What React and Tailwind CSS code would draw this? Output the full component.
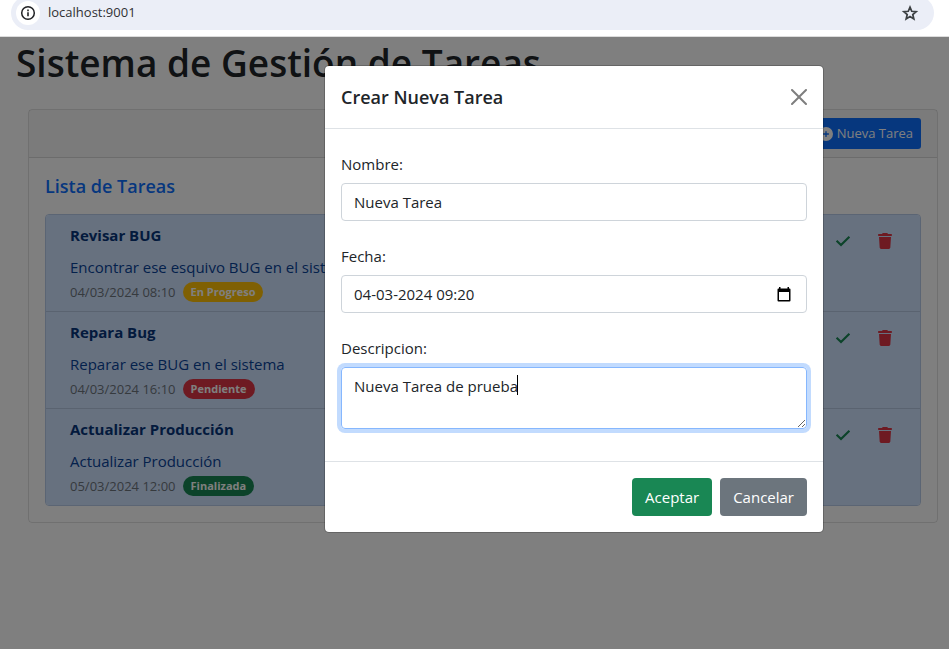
import { useEffect, useRef } from "react";
import { FaCirclePlus, FaTrash } from "react-icons/fa6";

const tasks = [
  {
    title: "Revisar BUG",
    description: "Encontrar ese esquivo BUG en el sistema",
    date: "04/03/2024 08:10",
    status: "En Progreso",
    badge: "bg-[#ffc107]",
  },
  {
    title: "Repara Bug",
    description: "Reparar ese BUG en el sistema",
    date: "04/03/2024 16:10",
    status: "Pendiente",
    badge: "bg-[#dc3545]",
  },
  {
    title: "Actualizar Producción",
    description: "Actualizar Producción",
    date: "05/03/2024 12:00",
    status: "Finalizada",
    badge: "bg-[#198754]",
  },
];

function InfoIcon() {
  return (
    <svg viewBox="0 0 16 16" className="size-4" fill="none" stroke="currentColor">
      <circle cx="8" cy="8" r="6.3" strokeWidth="1.5" />
      <path d="M8 7.2v4" strokeWidth="1.6" />
      <path d="M8 4.6v1.6" strokeWidth="1.6" />
    </svg>
  );
}

function StarIcon() {
  return (
    <svg viewBox="0 0 24 24" className="size-[18px]" fill="none" stroke="currentColor" strokeWidth="2.3">
      <path d="M12 4.2l2.3 5.5 5.9.5-4.5 3.9 1.4 5.8-5.1-3.1-5.1 3.1 1.4-5.8-4.5-3.9 5.9-.5z" />
    </svg>
  );
}

function CheckIcon() {
  return (
    <svg viewBox="0 0 16 16" className="size-4" fill="none" stroke="currentColor" strokeWidth="2.2">
      <path d="M1.6 7.8L6 12 14.4 3.7" />
    </svg>
  );
}

function AddressBar() {
  return (
    <header className="overflow-hidden border-b border-[#dcdcdc] bg-white pr-[15px] pb-1.5 pl-[11px]">
      <div className="-mt-1 flex h-[34px] items-center rounded-full bg-[#ebeef7] pr-[15px] pl-[5px]">
        <button aria-label="Información del sitio" className="flex size-6 items-center justify-center rounded-full bg-white text-[#202124]">
          <InfoIcon />
        </button>
        <input
          aria-label="Dirección"
          defaultValue="localhost:9001"
          className="ml-2 min-w-0 flex-1 bg-transparent text-[13px] text-[#303134] outline-none"
        />
        <button aria-label="Guardar en favoritos" className="text-[#3c4043]">
          <StarIcon />
        </button>
      </div>
    </header>
  );
}

function TaskRow({ task }) {
  return (
    <li className="flex border-b border-black/12 bg-[#cfe2ff] pt-2 pr-[27px] pb-[7px] pl-6 last:border-b-0">
      <div className="flex-1">
        <h3 className="mb-2 text-[15px] leading-6 font-bold text-[#06357a]">{task.title}</h3>
        <p className="text-[15px] leading-6 text-[#084298]">{task.description}</p>
        <p className="flex items-center gap-[7px] pt-px text-[13px] leading-6 text-[#6c757d]">
          {task.date}
          <span className={`rounded-full px-2 text-[11px] leading-5 font-bold text-white ${task.badge}`}>
            {task.status}
          </span>
        </p>
      </div>
      <div className="flex h-9 items-center gap-[26px]">
        <button aria-label="Finalizar tarea" className="text-[#198754]">
          <CheckIcon />
        </button>
        <button aria-label="Eliminar tarea" className="text-[#dc3545]">
          <FaTrash className="size-4" />
        </button>
      </div>
    </li>
  );
}

function TaskBoard() {
  return (
    <section className="mr-[11px] ml-7 rounded border border-black/12">
      <div className="flex justify-end border-b border-black/12 bg-black/3 px-4 py-2">
        <button className="flex h-[31px] items-center gap-1 rounded-[3px] bg-[#0d6efd] px-2 text-[13px] text-white">
          <FaCirclePlus className="size-3.5" />
          Nueva Tarea
        </button>
      </div>
      <div className="p-4">
        <h2 className="mb-4 text-[18px] leading-6 font-semibold text-[#0d6efd]">Lista de Tareas</h2>
        <ul className="overflow-hidden rounded border border-[#b6cbe9]">
          {tasks.map((task) => (
            <TaskRow key={task.title} task={task} />
          ))}
        </ul>
      </div>
    </section>
  );
}

const control = "block w-full rounded border px-3 py-1.5 text-[15px] leading-6 text-[#212529] outline-none";
const label = "block py-[7px] text-[15px] leading-6";
const action = "rounded px-[13px] py-[7px] text-[15px] leading-6 text-white";

function NewTaskModal() {
  const description = useRef(null);

  useEffect(() => {
    const field = description.current;
    field.focus();
    field.setSelectionRange(field.value.length, field.value.length);
  }, []);

  return (
    <form
      role="dialog"
      aria-labelledby="modal-title"
      className="w-[500px] rounded-[5px] border border-black/20 bg-white bg-clip-padding text-[#212529]"
    >
      <div className="flex items-center justify-between border-b border-[#dee2e6] p-4">
        <h2 id="modal-title" className="text-[18px] leading-[30px] font-semibold">
          Crear Nueva Tarea
        </h2>
        <button type="button" aria-label="Cerrar" className="opacity-50">
          <svg viewBox="0 0 16 16" className="size-4">
            <path
              fill="#000"
              d="M.293.293a1 1 0 0 1 1.414 0L8 6.586 14.293.293a1 1 0 1 1 1.414 1.414L9.414 8l6.293 6.293a1 1 0 0 1-1.414 1.414L8 9.414l-6.293 6.293a1 1 0 0 1-1.414-1.414L6.586 8 .293 1.707a1 1 0 0 1 0-1.414z"
            />
          </svg>
        </button>
      </div>
      <div className="flex flex-col gap-4 px-4 pt-4 pb-8">
        <div>
          <label htmlFor="name" className={label}>Nombre:</label>
          <input id="name" defaultValue="Nueva Tarea" className={`${control} border-[#ced4da]`} />
        </div>
        <div>
          <label htmlFor="date" className={label}>Fecha:</label>
          <div className="flex items-center rounded border border-[#ced4da] pr-[15px]">
            <input
              id="date"
              defaultValue="04-03-2024 09:20"
              className="min-w-0 flex-1 py-1.5 pl-3 text-[15px] leading-6 outline-none"
            />
            <button type="button" aria-label="Mostrar selector de fecha">
              <svg viewBox="0 0 14 15" className="h-[15px] w-3.5">
                <path
                  fill="#000"
                  fillRule="evenodd"
                  d="M2 0h1.5v1.5h7V0H12v1.5h.5a1 1 0 0 1 1 1v11a1 1 0 0 1-1 1h-11a1 1 0 0 1-1-1v-11a1 1 0 0 1 1-1H2zM2 5v8h10V5z"
                />
              </svg>
            </button>
          </div>
        </div>
        <div>
          <label htmlFor="description" className={label}>Descripcion:</label>
          <div className="relative">
            <textarea
              ref={description}
              id="description"
              rows={2}
              defaultValue="Nueva Tarea de prueba"
              className={`${control} resize-y border-[#86b7fe] caret-transparent ring-4 ring-[#0d6efd]/25`}
            />
            <span className="absolute top-2 left-44 h-5 w-px bg-black" />
          </div>
        </div>
      </div>
      <div className="flex justify-end gap-2 border-t border-[#dee2e6] p-4">
        <button type="button" className={`${action} bg-[#198754]`}>
          Aceptar
        </button>
        <button type="button" className={`${action} bg-[#6c757d]`}>
          Cancelar
        </button>
      </div>
    </form>
  );
}

export default function App() {
  return (
    <div className="flex min-h-screen flex-col bg-white font-['Open_Sans','Noto_Sans',sans-serif] text-[#212529]">
      <AddressBar />
      <main className="relative flex-1">
        <h1 className="mb-[22px] pt-0.5 pl-4 text-[37px] leading-[48px] font-semibold">
          Sistema de Gestión de Tareas
        </h1>
        <TaskBoard />
        <div className="absolute inset-0 flex items-start justify-end bg-black/50 pt-7 pr-[125px]">
          <NewTaskModal />
        </div>
      </main>
    </div>
  );
}
